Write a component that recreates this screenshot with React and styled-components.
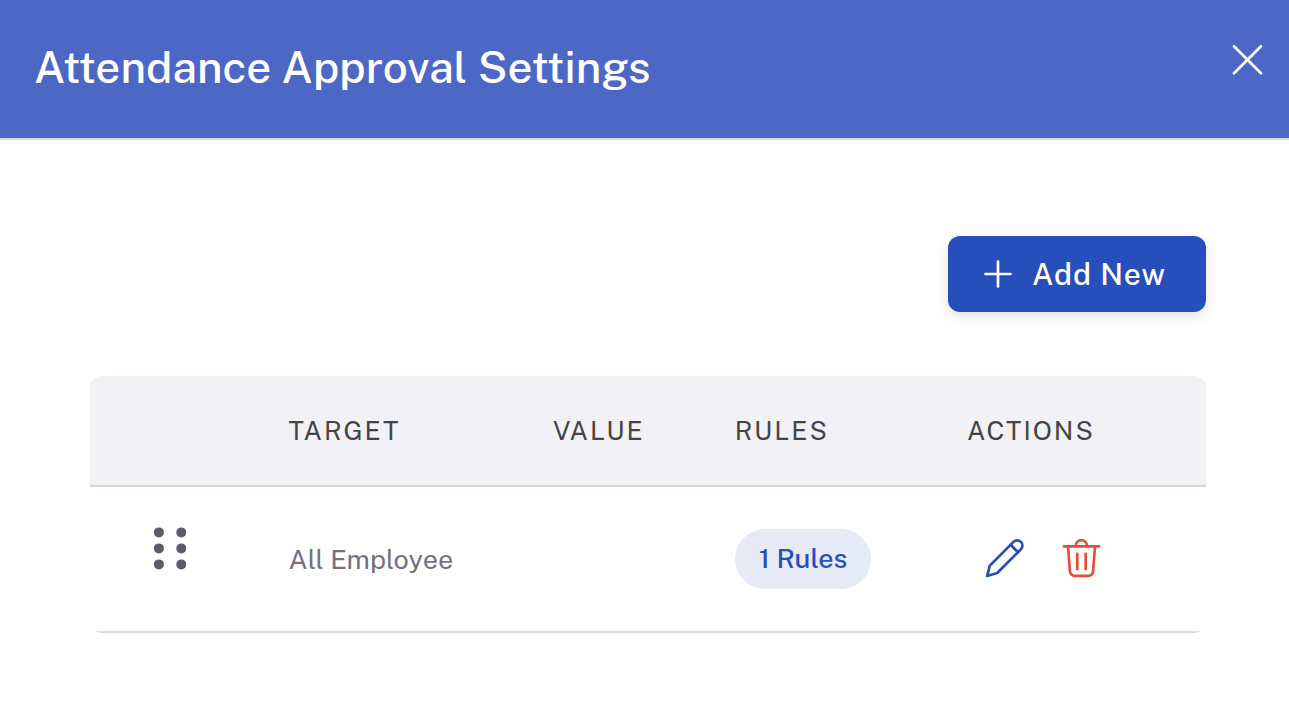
import React from "react";
import styled, { createGlobalStyle } from "styled-components";

const columns = [
  { key: "drag", label: "", width: "14.2%" },
  { key: "target", label: "Target", width: "23.7%" },
  { key: "value", label: "Value", width: "16.3%" },
  { key: "rules", label: "Rules", width: "20.8%" },
  { key: "actions", label: "Actions", width: "25%" },
];

const settings = [{ id: 1, target: "All Employee", value: "", rules: 1 }];

const CloseIcon = () => (
  <Icon $size={32} viewBox="0 0 32 32" aria-hidden="true">
    <path d="M3 2.2l27 27M30 2.2l-27 27" />
  </Icon>
);

const PlusIcon = () => (
  <Icon $size={28} viewBox="0 0 28 28" aria-hidden="true">
    <path d="M14 1.5v25M1.5 14h25" />
  </Icon>
);

const DragIcon = () => (
  <DotsIcon viewBox="0 0 34 44" aria-hidden="true">
    {[6.4, 22.4, 38.4].map((y) => (
      <React.Fragment key={y}>
        <circle cx="6.9" cy={y} r="5" />
        <circle cx="29.3" cy={y} r="5" />
      </React.Fragment>
    ))}
  </DotsIcon>
);

const PencilIcon = () => (
  <Icon $size={40} viewBox="0 0 40 40" aria-hidden="true">
    <path d="M2.2 37L4.8 26.6L28.5 2.9A5.2 5.2 0 0 1 35.9 10.3L12.2 34Z" />
    <path d="M25.6 5.8L33 13.2" />
  </Icon>
);

const TrashIcon = () => (
  <Icon $size={40} viewBox="0 0 40 40" aria-hidden="true">
    <path d="M3 7.3h35" />
    <path d="M15 7.3v-.8a5.4 5.4 0 0 1 10.8 0v.8" />
    <path d="M7 7.5l1.9 24.6a5 5 0 0 0 5 4.7h13.2a5 5 0 0 0 5-4.7l1.9-24.6" />
    <path d="M16.3 14.8v15.4M24.7 14.8v15.4" />
  </Icon>
);

const App = () => {
  return (
    <>
      <GlobalStyle />
      <Header>
        <Title>Attendance Approval Settings</Title>
        <CloseButton type="button" aria-label="Close">
          <CloseIcon />
        </CloseButton>
      </Header>
      <Content>
        <Toolbar>
          <AddButton type="button">
            <PlusIcon />
            Add New
          </AddButton>
        </Toolbar>
        <TableWrapper>
          <Table>
            <thead>
              <tr>
                {columns.map((column) => (
                  <HeadCell key={column.key} scope="col" $width={column.width}>
                    {column.label}
                  </HeadCell>
                ))}
              </tr>
            </thead>
            <tbody>
              {settings.map((item) => (
                <tr key={item.id}>
                  <DragCell>
                    <DragIcon />
                  </DragCell>
                  <Cell>{item.target}</Cell>
                  <Cell>{item.value}</Cell>
                  <Cell>
                    <Badge>{item.rules} Rules</Badge>
                  </Cell>
                  <Cell>
                    <Actions>
                      <ActionButton type="button" aria-label="Edit" $color="#264fbb">
                        <PencilIcon />
                      </ActionButton>
                      <ActionButton type="button" aria-label="Delete" $color="#e34f32">
                        <TrashIcon />
                      </ActionButton>
                    </Actions>
                  </Cell>
                </tr>
              ))}
            </tbody>
          </Table>
        </TableWrapper>
      </Content>
    </>
  );
};

const GlobalStyle = createGlobalStyle`
  * {
    box-sizing: border-box;
  }
  body {
    margin: 0;
    background: #fff;
    font-family: "Public Sans", Inter, "Liberation Sans", sans-serif;
  }
  button {
    border: none;
    background: none;
    padding: 0;
    font-family: inherit;
    cursor: pointer;
  }
`;
const Icon = styled.svg`
  display: block;
  flex: none;
  width: ${(props) => props.$size}px;
  height: ${(props) => props.$size}px;
  fill: none;
  stroke: currentColor;
  stroke-width: 2.7;
  stroke-linecap: round;
  stroke-linejoin: round;
`;
const DotsIcon = styled.svg`
  display: block;
  width: 34px;
  height: 44px;
  margin: 0 auto;
  fill: #5d596c;
`;
const Header = styled.header`
  display: flex;
  justify-content: space-between;
  align-items: flex-start;
  padding: 40px 26px 44px 34px;
  background: #4d68c4;
  border-bottom: 2px solid #dbdade;
`;
const Title = styled.h1`
  margin: 0;
  color: #fff;
  font-size: 44px;
  font-weight: 500;
  line-height: 54px;
`;
const CloseButton = styled.button`
  margin-top: 4px;
  color: #fff;
`;
const Content = styled.main`
  padding: 96px 83px 48px 90px;
`;
const Toolbar = styled.div`
  display: flex;
  justify-content: flex-end;
  margin-bottom: 64px;
`;
const AddButton = styled.button`
  display: flex;
  align-items: center;
  gap: 20px;
  height: 76px;
  padding: 0 40px 0 36px;
  border-radius: 12px;
  background: #264fbb;
  box-shadow: 0 4px 12px rgba(75, 70, 92, 0.16);
  color: #fff;
  font-size: 30px;
  font-weight: 500;
  letter-spacing: 1px;
`;
const TableWrapper = styled.div`
  overflow: hidden;
  border-radius: 12px;
`;
const Table = styled.table`
  width: 100%;
  table-layout: fixed;
  border-collapse: separate;
  border-spacing: 0;
`;
const HeadCell = styled.th`
  width: ${(props) => props.$width};
  height: 111px;
  padding: 0 0 0 40px;
  border-bottom: 2px solid #d5d4d9;
  background: #f2f1f6;
  color: #444;
  font-size: 26px;
  font-weight: 400;
  letter-spacing: 2px;
  text-align: left;
  text-transform: uppercase;
`;
const Cell = styled.td`
  height: 146px;
  padding: 0 0 0 40px;
  border-bottom: 2px solid #dbdbdc;
  color: #75717f;
  font-size: 27px;
  line-height: 30px;
`;
const DragCell = styled(Cell)`
  padding: 0 0 22px;
`;
const Badge = styled.span`
  display: inline-block;
  padding: 0 24px 2px;
  border-radius: 30px;
  background: #e5eaf6;
  color: #264fbb;
  font-weight: 500;
  line-height: 58px;
`;
const Actions = styled.div`
  display: flex;
`;
const ActionButton = styled.button`
  padding: 18px;
  color: ${(props) => props.$color};
`;

export default App;
